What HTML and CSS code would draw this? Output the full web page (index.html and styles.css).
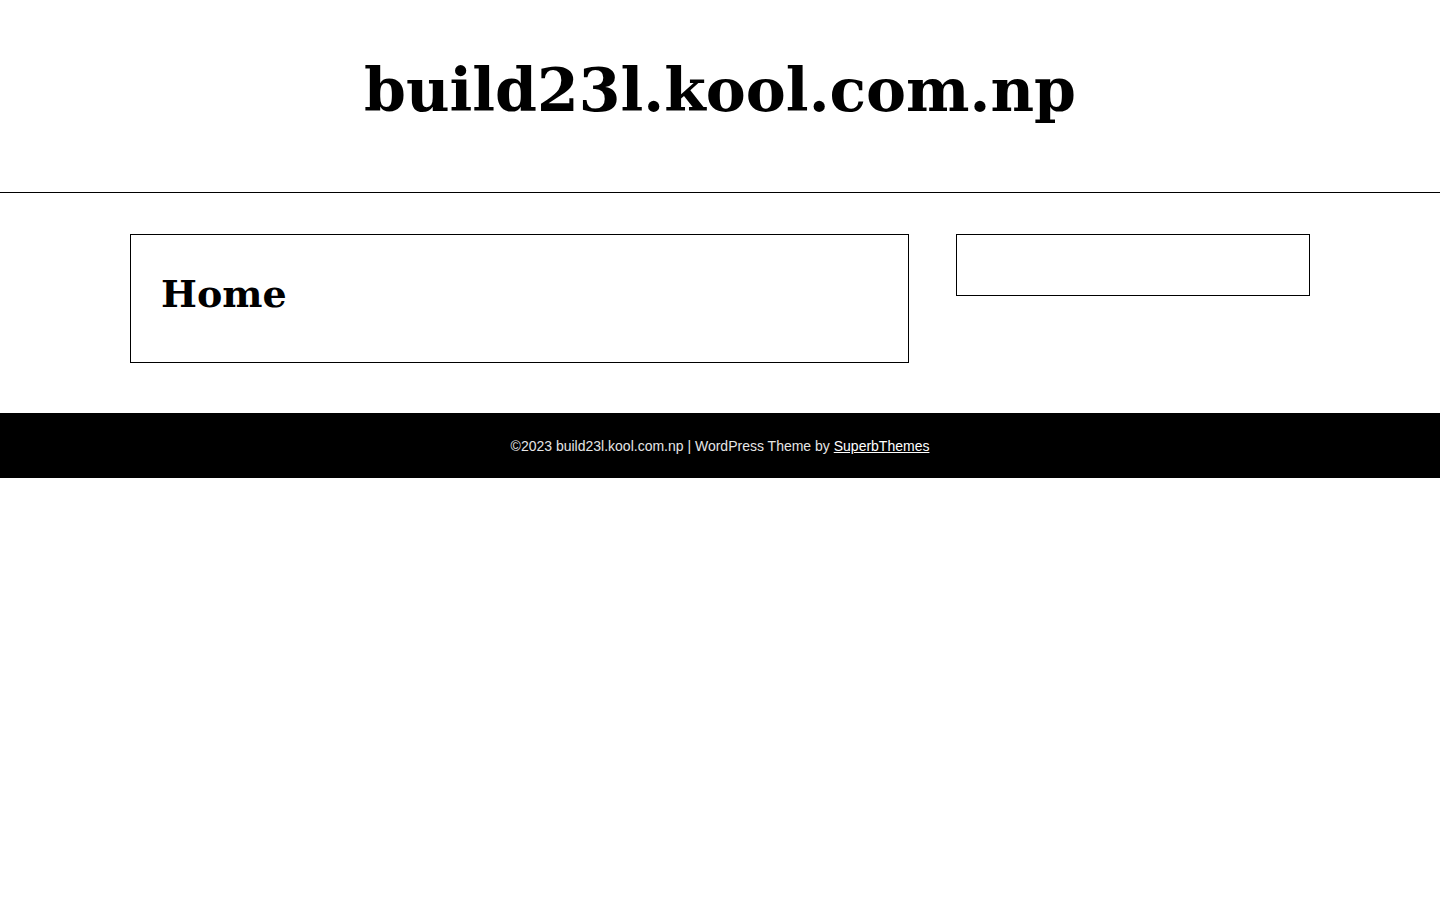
FILE: index.html
```html
<!DOCTYPE html>
<html lang="en">
<head>
<meta charset="utf-8">
<title>build23l.kool.com.np</title>
<link rel="stylesheet" href="styles.css">
</head>
<body>
<header class="site-header">
  <h1 class="site-title">build23l.kool.com.np</h1>
</header>
<main class="content">
  <article class="post-box">
    <h2 class="post-title">Home</h2>
  </article>
  <aside class="sidebar-box"></aside>
</main>
<footer class="site-footer">
  <p class="footer-text">©2023 build23l.kool.com.np | WordPress Theme by <a href="#">SuperbThemes</a></p>
</footer>
</body>
</html>
```

FILE: styles.css
```css
html, body {
  margin: 0;
  padding: 0;
  background: #fff;
  color: #000;
}
body {
  font-family: "DejaVu Serif", serif;
}
.site-header {
  height: 192px;
  border-bottom: 1px solid #000;
  display: flex;
  justify-content: center;
  align-items: flex-start;
}
.site-title {
  margin: 52px 0 0 0;
  font-family: "DejaVu Serif", serif;
  font-weight: bold;
  font-size: 60px;
  line-height: 76px;
}
.content {
  width: 1180px;
  margin: 0 auto;
  padding: 41px 0 50px;
  display: flex;
  justify-content: space-between;
  align-items: flex-start;
}
.post-box {
  width: 777px;
  border: 1px solid #000;
  padding: 30px 30px;
  box-sizing: border-box;
  width: 779px;
  height: 129px;
}
.post-title {
  margin: 0;
  font-family: "DejaVu Serif", serif;
  font-weight: bold;
  font-size: 38px;
  line-height: 58px;
}
.sidebar-box {
  width: 354px;
  height: 62px;
  box-sizing: border-box;
  border: 1px solid #000;
}
.site-footer {
  background: #000;
  height: 65px;
  display: flex;
  align-items: center;
  justify-content: center;
}
.footer-text {
  margin: 0;
  font-family: "Liberation Sans", Arial, sans-serif;
  font-size: 14px;
  color: #e6e6e6;
}
.footer-text a {
  color: #fff;
  text-decoration: underline;
}
```
